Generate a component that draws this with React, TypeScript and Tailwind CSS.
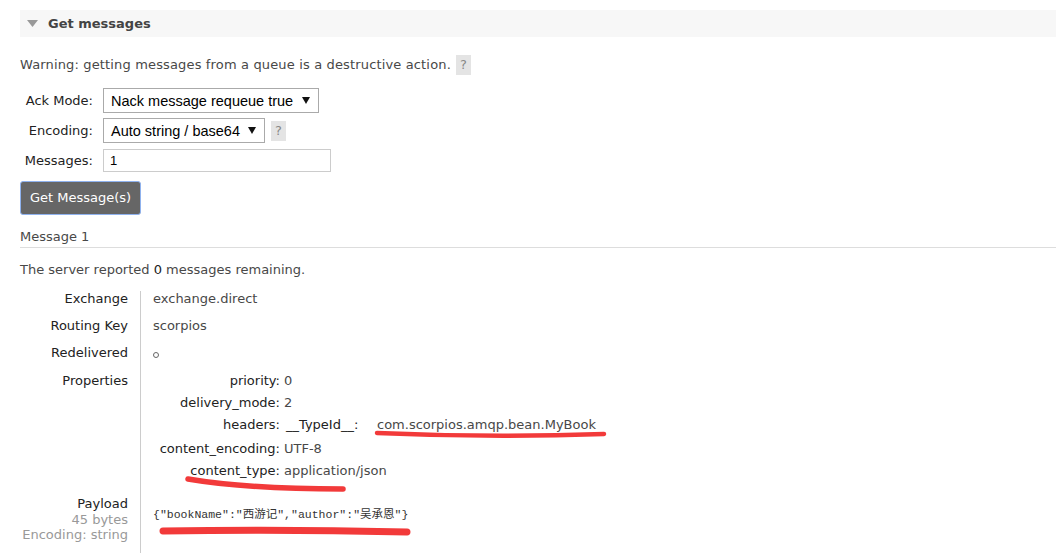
import React from 'react';

const Caret = () => (
  <svg width="8" height="7" viewBox="0 0 8 7" className="shrink-0">
    <polygon points="0,0 8,0 4,7" fill="#111" />
  </svg>
);

const Help = ({ className = '' }: { className?: string }) => (
  <span
    className={`inline-flex h-[20px] w-[15px] items-center justify-center bg-[#e4e4e4] text-[13px] text-[#888] ${className}`}
  >
    ?
  </span>
);

const FormRow = ({ label, children, className = '' }: { label: string; children: React.ReactNode; className?: string }) => (
  <div className={`flex items-center ${className}`}>
    <span className="mr-[10px] w-[73px] text-right text-[#222]">{label}</span>
    {children}
  </div>
);

const props: { key: string; value: React.ReactNode; h: string }[] = [
  { key: 'priority:', value: '0', h: 'h-[22px]' },
  { key: 'delivery_mode:', value: '2', h: 'h-[22px]' },
  {
    key: 'headers:',
    value: (
      <span className="flex">
        <span className="w-[93px] pl-[2px] text-[#222]">__TypeId__:</span>
        <span>com.scorpios.amqp.bean.MyBook</span>
      </span>
    ),
    h: 'h-[24px]',
  },
  { key: 'content_encoding:', value: 'UTF-8', h: 'h-[22px]' },
  { key: 'content_type:', value: 'application/json', h: 'h-[16px]' },
];

const DetailRow = ({ label, h, children }: { label: React.ReactNode; h: string; children: React.ReactNode }) => (
  <div className={`flex ${h}`}>
    <div className="w-[121px] shrink-0 border-r border-[#ccc] pr-3 text-right text-[#222]">{label}</div>
    <div className="pl-3">{children}</div>
  </div>
);

export default function App() {
  return (
    <div className="relative h-[560px] w-[1056px] overflow-hidden bg-white pl-5 pt-[10px] font-['DejaVu_Sans',sans-serif] text-[13px] leading-[16px] text-[#484848]">
      <div className="flex h-[27px] items-center gap-[10px] bg-[#f7f7f7] pl-[7px]">
        <svg width="11" height="7" viewBox="0 0 11 7">
          <polygon points="0,0 11,0 5.5,7" fill="#999" />
        </svg>
        <h2 className="pt-[1px] text-[13px] font-bold text-[#444]">Get messages</h2>
      </div>

      <div className="mt-[18px] flex h-[20px] items-center">
        <span className="tracking-[0.15px]">Warning: getting messages from a queue is a destructive action.</span>
        <Help className="ml-[5px]" />
      </div>

      <div className="mt-[13px]">
        <FormRow label="Ack Mode:">
          <div className="flex h-[25px] w-[216px] items-center justify-between border border-[#aaa] bg-white pl-[7px] pr-[8px] font-['Liberation_Sans',sans-serif] text-[14.5px] text-black">
            <span>Nack message requeue true</span>
            <Caret />
          </div>
        </FormRow>
        <FormRow label="Encoding:" className="mt-[5px]">
          <div className="flex h-[25px] w-[162px] items-center justify-between border border-[#aaa] bg-white pl-[7px] pr-[8px] font-['Liberation_Sans',sans-serif] text-[14.5px] text-black">
            <span>Auto string / base64</span>
            <Caret />
          </div>
          <Help className="ml-[6px]" />
        </FormRow>
        <FormRow label="Messages:" className="mt-[6px]">
          <div className="flex h-[23px] w-[228px] items-center border border-[#ccc] bg-white pl-[6px] font-['Liberation_Sans',sans-serif] text-[13px] text-black">
            1
          </div>
        </FormRow>
      </div>

      <button className="mt-[9px] flex h-[34px] w-[121px] items-center justify-center rounded-[3px] border border-[#8fb2ee] bg-[#666] text-[13px] text-white">
        Get Message(s)
      </button>

      <div className="mt-[13px] h-[20px] border-b border-[#ddd] pt-[1px]">Message 1</div>

      <p className="mt-[13px] pt-[1px]">
        The server reported <span className="text-[#222]">0</span> messages remaining.
      </p>

      <div className="mt-[13px]">
        <DetailRow label="Exchange" h="h-[27px]">exchange.direct</DetailRow>
        <DetailRow label="Routing Key" h="h-[27px]">scorpios</DetailRow>
        <DetailRow label="Redelivered" h="h-[28px]">
          <span className="mt-[7px] block h-[6px] w-[6px] rounded-full border border-[#666]" />
        </DetailRow>
        <DetailRow label="Properties" h="h-[123px]">
          {props.map((p) => (
            <div key={p.key} className={`flex ${p.h}`}>
              <span className="w-[131px] pr-[4px] text-right text-[#222]">{p.key}</span>
              <span>{p.value}</span>
            </div>
          ))}
        </DetailRow>
        <DetailRow
          label={
            <>
              <div>Payload</div>
              <div className="leading-[15px] text-[#999]">45 bytes</div>
              <div className="leading-[15px] text-[#999]">Encoding: string</div>
            </>
          }
          h="h-[57px]"
        >
          <pre className="mt-[11px] font-['Liberation_Mono','Noto_Sans_CJK_SC',monospace] text-[11.5px] text-[#333]">
            {'{"bookName":"西游记","author":"吴承恩"}'}
          </pre>
        </DetailRow>
      </div>

      <svg className="pointer-events-none absolute left-0 top-0" width="1056" height="560">
        <g fill="none" stroke="#f23a3a" strokeLinecap="round">
          <path d="M377 433 Q 490 438 604 434" strokeWidth="4.5" />
          <path d="M188 479 C 235 487 300 489 343 489" strokeWidth="5.5" />
          <path d="M163 531 Q 285 529 407 532" strokeWidth="7" />
        </g>
      </svg>
    </div>
  );
}
